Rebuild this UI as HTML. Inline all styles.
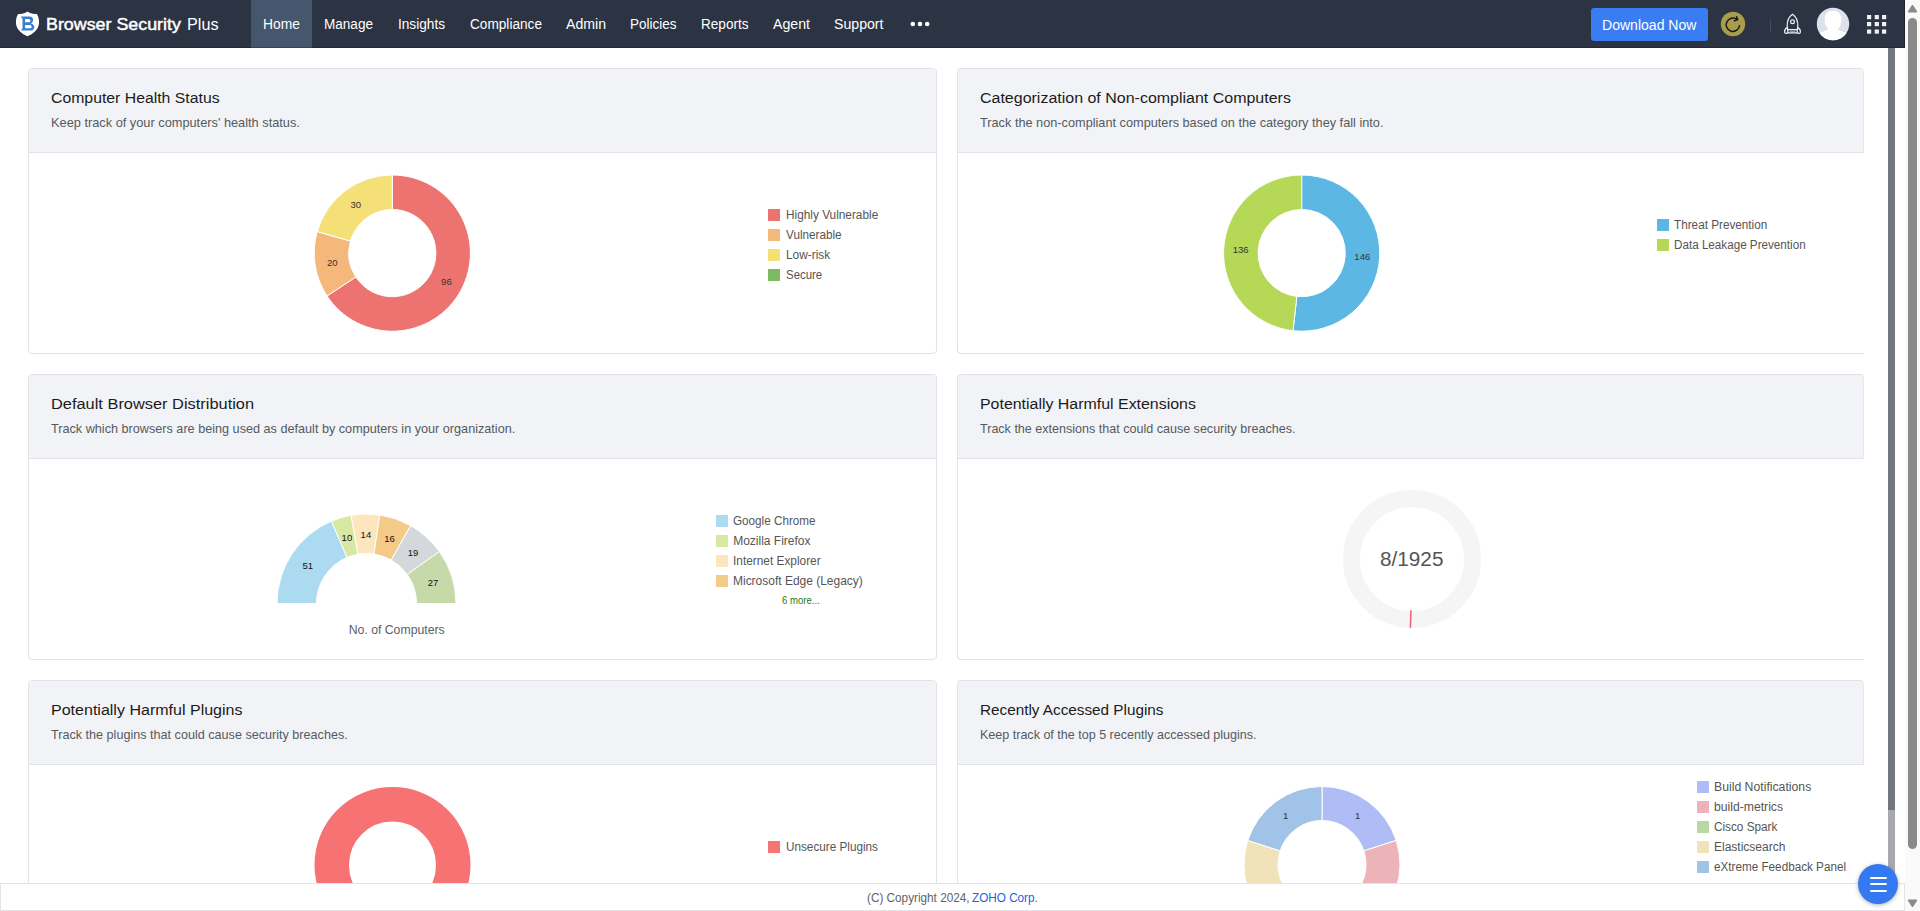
<!DOCTYPE html>
<html><head><meta charset="utf-8">
<style>
*{box-sizing:border-box;margin:0;padding:0}
html,body{width:1920px;height:911px;overflow:hidden;background:#fff;font-family:"Liberation Sans",sans-serif}
.a{position:absolute;white-space:nowrap;line-height:1}
.s{display:inline-block;transform-origin:0 0}
#hdr{position:absolute;left:0;top:0;width:1905px;height:48px;background:#2c3443}
#home{position:absolute;left:251px;top:0;width:61px;height:48px;background:#46566c}
.nav{color:#fff;font-size:14px;top:17px}
.card{position:absolute;border:1px solid #e2e3e8;border-radius:4px;background:#fff;overflow:hidden}
.ch{position:absolute;left:0;top:0;right:0;height:84px;background:#f2f3f7;border-bottom:1px solid #e2e3e8}
.ttl{font-size:15.5px;color:#1b1b1b}
.sub{font-size:13px;color:#555a60}
.lg{font-size:12px;color:#555}
.chr{border-right:1px solid #e6e7ec;border-top-right-radius:4px}
.sq{position:absolute;width:12px;height:12px}
.dl{font-size:10px;color:#333}
</style></head><body>

<!-- HEADER -->
<div id="hdr">
  <div id="home"></div>
  <div class="a" style="left:0;top:47px;width:1905px;height:1px;background:rgba(0,0,0,.22)"></div>
  <div class="a" style="left:1904px;top:0;width:1px;height:48px;background:rgba(0,0,0,.3)"></div>
  <svg class="a" style="left:12px;top:8px" width="32" height="32" viewBox="0 0 32 32">
    <path d="M15.5 3.6 C13.2 5.6 9.5 6.3 6.1 5.9 C4.3 9 3.8 12 4 15.2 C4.4 21.5 10 26 15.5 28.2 C21 26 26.6 21.5 27 15.2 C27.2 12 26.7 9 24.9 5.9 C21.5 6.3 17.8 5.6 15.5 3.6 Z" fill="#fff"/>
    <path fill-rule="evenodd" fill="#3b7dd0" d="M9.3 8.6 L17.5 8.6 C20 8.6 21.1 10 21.1 11.8 C21.1 13.5 20.2 14.7 19 15.5 C21.2 16.1 22.3 17.7 22.3 19.2 C22.3 21.2 20.7 22.6 18 22.6 L9.3 22.6 L9.3 21.5 L10.5 20.8 L10.5 10.5 L9.3 9.7 Z M13.1 11.1 L16.7 11.1 C17.9 11.1 18.4 11.9 18.4 12.7 C18.4 13.6 17.7 14.3 16.5 14.3 L13.1 14.3 Z M13.1 17.1 L17.8 17.1 C19 17.1 19.6 17.9 19.6 18.7 C19.6 19.6 19 20.3 17.8 20.3 L13.1 20.3 Z"/>
  </svg>
  <div class="a" style="left:45.5px;top:16px;font-size:17px;color:#fff;-webkit-text-stroke:.45px #fff"><span class="s" style="transform:scaleX(1.05)">Browser Security</span></div>
  <div class="a" style="left:187px;top:16px;font-size:17px;color:#fff"><span class="s" style="transform:scaleX(.952)">Plus</span></div>
  <div class="a nav" style="left:262.5px"><span class="s" style="transform:scaleX(.99)">Home</span></div>
  <div class="a nav" style="left:324px"><span class="s" style="transform:scaleX(.968)">Manage</span></div>
  <div class="a nav" style="left:397.5px"><span class="s" style="transform:scaleX(.974)">Insights</span></div>
  <div class="a nav" style="left:469.5px"><span class="s" style="transform:scaleX(.974)">Compliance</span></div>
  <div class="a nav" style="left:565.5px"><span class="s" style="transform:scaleX(1.008)">Admin</span></div>
  <div class="a nav" style="left:630px"><span class="s" style="transform:scaleX(.964)">Policies</span></div>
  <div class="a nav" style="left:701px"><span class="s" style="transform:scaleX(.969)">Reports</span></div>
  <div class="a nav" style="left:773px"><span class="s" style="transform:scaleX(1.011)">Agent</span></div>
  <div class="a nav" style="left:834px"><span class="s" style="transform:scaleX(1.009)">Support</span></div>
  <svg class="a" style="left:908px;top:18px" width="24" height="12" viewBox="0 0 24 12">
    <circle cx="4.8" cy="6" r="2.3" fill="#fff"/><circle cx="12" cy="6" r="2.3" fill="#fff"/><circle cx="19.2" cy="6" r="2.3" fill="#fff"/>
  </svg>
  <div class="a" style="left:1591px;top:8px;width:117px;height:33px;background:#3a7cf1;border-radius:3px"></div>
  <div class="a" style="left:1602px;top:17.5px;font-size:14px;color:#fff"><span class="s" style="transform:scaleX(1.003)">Download Now</span></div>
  <svg class="a" style="left:1720px;top:11px" width="26" height="26" viewBox="0 0 26 26">
    <circle cx="13" cy="13" r="12.2" fill="#a99c4b"/>
    <path d="M19.6 14.2 A6.7 6.7 0 1 1 17 8.4" fill="none" stroke="#12161c" stroke-width="1.5"/>
    <path d="M16.4 5.3 L17.6 8.6 L13.8 10" fill="none" stroke="#12161c" stroke-width="1.5" stroke-linejoin="miter"/>
  </svg>
  <div class="a" style="left:1770px;top:19px;width:1px;height:13px;background:#3b4c68"></div>
  <svg class="a" style="left:1782px;top:12px" width="22" height="24" viewBox="0 0 22 24">
    <g fill="none" stroke="#eef0f4" stroke-width="1.2" stroke-linejoin="round">
    <path d="M10.5 2.2 C6.8 4.8 5 9.5 5.2 14 L5.6 17.6 L15.4 17.6 L15.8 14 C16 9.5 14.2 4.8 10.5 2.2 Z"/>
    <path d="M5.8 17.6 L5.8 20.9 L15.2 20.9 L15.2 17.6"/>
    <path d="M5.3 15.6 C3.4 16.4 2.5 18 2.6 20 C2.7 21 3.4 21.6 4.3 21.4 L5.8 20.9"/>
    <path d="M15.7 15.6 C17.6 16.4 18.5 18 18.4 20 C18.3 21 17.6 21.6 16.7 21.4 L15.2 20.9"/>
    <circle cx="10.5" cy="9.8" r="1.9"/>
    </g>
    <rect x="7.8" y="18.6" width="5.6" height="1.4" fill="#8d939c"/>
  </svg>
  <svg class="a" style="left:1816px;top:7px" width="34" height="34" viewBox="0 0 34 34">
    <defs><clipPath id="av"><circle cx="17" cy="17" r="16.2"/></clipPath></defs>
    <circle cx="17" cy="17" r="16.2" fill="#dde1ea"/>
    <g clip-path="url(#av)" fill="#fff">
      <path d="M17 3.8 C11.6 3.8 8.6 7.3 8.7 12 C8.7 16.2 9.6 19.3 11.6 21.6 L11.6 23 C8.4 24.2 5 25 2.5 26.8 L2.5 34 L31.5 34 L31.5 26.8 C29 25 25.6 24.2 22.4 23 L22.4 21.6 C24.4 19.3 25.3 16.2 25.3 12 C25.4 7.3 22.4 3.8 17 3.8 Z"/>
    </g>
  </svg>
  <svg class="a" style="left:1866px;top:14px" width="22" height="21" viewBox="0 0 22 21">
    <g fill="#eef0f4">
    <rect x="1" y="1" width="4.2" height="4.2"/><rect x="8.7" y="1" width="4.2" height="4.2"/><rect x="16" y="1" width="4.2" height="4.2"/>
    <rect x="1" y="8" width="4.2" height="4.2"/><rect x="8.7" y="8" width="4.2" height="4.2"/><rect x="16" y="8" width="4.2" height="4.2"/>
    <rect x="1" y="15.5" width="4.2" height="4.2"/><rect x="8.7" y="15.5" width="4.2" height="4.2"/><rect x="16" y="15.5" width="4.2" height="4.2"/>
    </g>
  </svg>
</div>

<!-- CARDS -->
<div class="card" style="left:28px;top:68px;width:909px;height:286px"><div class="ch"></div></div>
<div class="card" style="left:957px;top:68px;width:907px;border-right:0;border-radius:4px 4px 0 4px;height:286px"><div class="ch chr"></div></div>
<div class="card" style="left:28px;top:374px;width:909px;height:286px"><div class="ch"></div></div>
<div class="card" style="left:957px;top:374px;width:907px;border-right:0;border-radius:4px 4px 0 4px;height:286px"><div class="ch chr"></div></div>
<div class="card" style="left:28px;top:680px;width:909px;height:286px"><div class="ch"></div></div>
<div class="card" style="left:957px;top:680px;width:907px;border-right:0;border-radius:4px 4px 0 4px;height:286px"><div class="ch chr"></div></div>

<svg class="a" style="left:0;top:0" width="1905" height="911" viewBox="0 0 1905 911">
<path d="M392.30 175.00A78.1 78.1 0 1 1 327.01 295.96L355.85 277.03A43.6 43.6 0 1 0 392.30 209.50Z" fill="#ec736f" stroke="#fff" stroke-width="1" stroke-linejoin="round"/>
<path d="M327.01 295.96A78.1 78.1 0 0 1 317.24 231.54L350.39 241.06A43.6 43.6 0 0 0 355.85 277.03Z" fill="#f4b87b" stroke="#fff" stroke-width="1" stroke-linejoin="round"/>
<path d="M317.24 231.54A78.1 78.1 0 0 1 392.30 175.00L392.30 209.50A43.6 43.6 0 0 0 350.39 241.06Z" fill="#f4e077" stroke="#fff" stroke-width="1" stroke-linejoin="round"/>
<path d="M1301.70 175.00A78.1 78.1 0 1 1 1293.02 330.72L1296.85 296.43A43.6 43.6 0 1 0 1301.70 209.50Z" fill="#5db7e4" stroke="#fff" stroke-width="1" stroke-linejoin="round"/>
<path d="M1293.02 330.72A78.1 78.1 0 0 1 1301.70 175.00L1301.70 209.50A43.6 43.6 0 0 0 1296.85 296.43Z" fill="#b5d857" stroke="#fff" stroke-width="1" stroke-linejoin="round"/>
<path d="M277.00 603.50A89.5 89.5 0 0 1 331.54 521.11L346.97 557.47A50 50 0 0 0 316.50 603.50Z" fill="#acdaf1" stroke="#fff" stroke-width="1" stroke-linejoin="round"/>
<path d="M331.54 521.11A89.5 89.5 0 0 1 351.18 515.32L357.94 554.24A50 50 0 0 0 346.97 557.47Z" fill="#d6e8a1" stroke="#fff" stroke-width="1" stroke-linejoin="round"/>
<path d="M351.18 515.32A89.5 89.5 0 0 1 379.79 514.99L373.93 554.05A50 50 0 0 0 357.94 554.24Z" fill="#fde5bd" stroke="#fff" stroke-width="1" stroke-linejoin="round"/>
<path d="M379.79 514.99A89.5 89.5 0 0 1 410.66 525.65L391.17 560.01A50 50 0 0 0 373.93 554.05Z" fill="#f4ca88" stroke="#fff" stroke-width="1" stroke-linejoin="round"/>
<path d="M410.66 525.65A89.5 89.5 0 0 1 439.39 551.56L407.22 574.48A50 50 0 0 0 391.17 560.01Z" fill="#d5d8da" stroke="#fff" stroke-width="1" stroke-linejoin="round"/>
<path d="M439.39 551.56A89.5 89.5 0 0 1 456.00 603.50L416.50 603.50A50 50 0 0 0 407.22 574.48Z" fill="#c6daa9" stroke="#fff" stroke-width="1" stroke-linejoin="round"/>
<circle cx="392.5" cy="865" r="60.75" fill="none" stroke="#f77272" stroke-width="34.5"/>
<path d="M1322.00 786.50A78 78 0 0 1 1396.18 840.40L1363.85 850.90A44 44 0 0 0 1322.00 820.50Z" fill="#b0bcf6" stroke="#fff" stroke-width="1" stroke-linejoin="round"/>
<path d="M1396.18 840.40A78 78 0 0 1 1367.85 927.60L1347.86 900.10A44 44 0 0 0 1363.85 850.90Z" fill="#ecb4b9" stroke="#fff" stroke-width="1" stroke-linejoin="round"/>
<path d="M1367.85 927.60A78 78 0 0 1 1276.15 927.60L1296.14 900.10A44 44 0 0 0 1347.86 900.10Z" fill="#bad7a1" stroke="#fff" stroke-width="1" stroke-linejoin="round"/>
<path d="M1276.15 927.60A78 78 0 0 1 1247.82 840.40L1280.15 850.90A44 44 0 0 0 1296.14 900.10Z" fill="#f0e2b9" stroke="#fff" stroke-width="1" stroke-linejoin="round"/>
<path d="M1247.82 840.40A78 78 0 0 1 1322.00 786.50L1322.00 820.50A44 44 0 0 0 1280.15 850.90Z" fill="#a1c3e7" stroke="#fff" stroke-width="1" stroke-linejoin="round"/>
<circle cx="1412" cy="559" r="60.5" fill="none" stroke="#f5f5f5" stroke-width="17"/>
<line x1="1410.9" y1="610.3" x2="1410.4" y2="627.7" stroke="#e8626a" stroke-width="1.5"/>
</svg>
<svg class="a" style="left:0;top:0" width="1905" height="911" viewBox="0 0 1905 911" font-family="Liberation Sans, sans-serif">
<text x="355.7" y="207.8" font-size="9.5" fill="#333" text-anchor="middle">30</text>
<text x="332.3" y="266.0" font-size="9.5" fill="#333" text-anchor="middle">20</text>
<text x="446.4" y="284.8" font-size="9.5" fill="#333" text-anchor="middle">96</text>
<text x="1240.7" y="253.1" font-size="9.5" fill="#333" text-anchor="middle">136</text>
<text x="1362.3" y="259.8" font-size="9.5" fill="#333" text-anchor="middle">146</text>
<text x="1285.7" y="819.1" font-size="9.5" fill="#333" text-anchor="middle">1</text>
<text x="1357.6" y="819.1" font-size="9.5" fill="#333" text-anchor="middle">1</text>
<text x="1264" y="889.4" font-size="9.5" fill="#333" text-anchor="middle">1</text>
<text x="1380" y="889.4" font-size="9.5" fill="#333" text-anchor="middle">1</text>
<text x="307.8" y="568.9" font-size="9.5" fill="#111" text-anchor="middle">51</text>
<text x="346.9" y="540.8" font-size="9.5" fill="#111" text-anchor="middle">10</text>
<text x="365.9" y="538.2" font-size="9.5" fill="#111" text-anchor="middle">14</text>
<text x="389.6" y="541.7" font-size="9.5" fill="#111" text-anchor="middle">16</text>
<text x="413.1" y="555.7" font-size="9.5" fill="#111" text-anchor="middle">19</text>
<text x="433" y="585.6" font-size="9.5" fill="#111" text-anchor="middle">27</text>
<text x="1411.7" y="566" font-size="20" fill="#555" text-anchor="middle" textLength="63.5" lengthAdjust="spacingAndGlyphs">8/1925</text>
<text x="348.7" y="633.6" font-size="12" fill="#5a5f66" textLength="96" lengthAdjust="spacingAndGlyphs">No. of Computers</text>
</svg>
<div class="sq" style="left:768px;top:209px;background:#ec736f"></div>
<div class="a lg" style="left:785.5px;top:209.4px"><span class="s" style="transform:scaleX(0.985)">Highly Vulnerable</span></div>
<div class="sq" style="left:768px;top:229px;background:#f4b87b"></div>
<div class="a lg" style="left:785.5px;top:229.4px"><span class="s" style="transform:scaleX(0.977)">Vulnerable</span></div>
<div class="sq" style="left:768px;top:249px;background:#f4e077"></div>
<div class="a lg" style="left:785.5px;top:249.4px"><span class="s" style="transform:scaleX(0.989)">Low-risk</span></div>
<div class="sq" style="left:768px;top:269px;background:#7dbb62"></div>
<div class="a lg" style="left:785.5px;top:269.4px"><span class="s" style="transform:scaleX(0.953)">Secure</span></div>
<div class="sq" style="left:1657px;top:219px;background:#5db7e4"></div>
<div class="a lg" style="left:1674.4px;top:219.4px"><span class="s" style="transform:scaleX(0.978)">Threat Prevention</span></div>
<div class="sq" style="left:1657px;top:239px;background:#b5d857"></div>
<div class="a lg" style="left:1674.4px;top:239.4px"><span class="s" style="transform:scaleX(0.972)">Data Leakage Prevention</span></div>
<div class="sq" style="left:716px;top:515px;background:#acdaf1"></div>
<div class="a lg" style="left:733.2px;top:515.4px"><span class="s" style="transform:scaleX(0.974)">Google Chrome</span></div>
<div class="sq" style="left:716px;top:535px;background:#d6e8a1"></div>
<div class="a lg" style="left:733.2px;top:535.4px"><span class="s" style="transform:scaleX(1.0)">Mozilla Firefox</span></div>
<div class="sq" style="left:716px;top:555px;background:#fde5bd"></div>
<div class="a lg" style="left:733.2px;top:555.4px"><span class="s" style="transform:scaleX(0.988)">Internet Explorer</span></div>
<div class="sq" style="left:716px;top:575px;background:#f4ca88"></div>
<div class="a lg" style="left:733.2px;top:575.4px"><span class="s" style="transform:scaleX(0.998)">Microsoft Edge (Legacy)</span></div>
<div class="a" style="left:782px;top:595.5px;font-size:10px;color:#1f7a0e"><span class="s" style="transform:scaleX(.955)">6 more...</span></div>
<div class="sq" style="left:768px;top:841px;background:#f77474"></div>
<div class="a lg" style="left:785.5px;top:841.4px"><span class="s" style="transform:scaleX(0.978)">Unsecure Plugins</span></div>
<div class="sq" style="left:1697px;top:781px;background:#b0bcf6"></div>
<div class="a lg" style="left:1714px;top:781.4px"><span class="s" style="transform:scaleX(1.02)">Build Notifications</span></div>
<div class="sq" style="left:1697px;top:801px;background:#ecb4b9"></div>
<div class="a lg" style="left:1714px;top:801.4px"><span class="s" style="transform:scaleX(1.015)">build-metrics</span></div>
<div class="sq" style="left:1697px;top:821px;background:#bad7a1"></div>
<div class="a lg" style="left:1714px;top:821.4px"><span class="s" style="transform:scaleX(0.98)">Cisco Spark</span></div>
<div class="sq" style="left:1697px;top:841px;background:#f0e2b9"></div>
<div class="a lg" style="left:1714px;top:841.4px"><span class="s" style="transform:scaleX(1.0)">Elasticsearch</span></div>
<div class="sq" style="left:1697px;top:861px;background:#a1c3e7"></div>
<div class="a lg" style="left:1714px;top:861.4px"><span class="s" style="transform:scaleX(0.975)">eXtreme Feedback Panel</span></div>
<!-- TITLES -->
<div class="a ttl" style="left:51px;top:89.5px"><span class="s" style="transform:scaleX(1.019)">Computer Health Status</span></div>
<div class="a sub" style="left:51px;top:116px"><span class="s" style="transform:scaleX(.983)">Keep track of your computers' health status.</span></div>
<div class="a ttl" style="left:980px;top:89.5px"><span class="s" style="transform:scaleX(1.031)">Categorization of Non-compliant Computers</span></div>
<div class="a sub" style="left:980px;top:116px"><span class="s" style="transform:scaleX(.979)">Track the non-compliant computers based on the category they fall into.</span></div>
<div class="a ttl" style="left:51px;top:395.5px"><span class="s" style="transform:scaleX(1.057)">Default Browser Distribution</span></div>
<div class="a sub" style="left:51px;top:422px"><span class="s" style="transform:scaleX(.973)">Track which browsers are being used as default by computers in your organization.</span></div>
<div class="a ttl" style="left:980px;top:395.5px"><span class="s" style="transform:scaleX(1.027)">Potentially Harmful Extensions</span></div>
<div class="a sub" style="left:980px;top:422px"><span class="s" style="transform:scaleX(.965)">Track the extensions that could cause security breaches.</span></div>
<div class="a ttl" style="left:51px;top:701.5px"><span class="s" style="transform:scaleX(1.034)">Potentially Harmful Plugins</span></div>
<div class="a sub" style="left:51px;top:728px"><span class="s" style="transform:scaleX(.97)">Track the plugins that could cause security breaches.</span></div>
<div class="a ttl" style="left:980px;top:701.5px"><span class="s" style="transform:scaleX(.986)">Recently Accessed Plugins</span></div>
<div class="a sub" style="left:980px;top:728px"><span class="s" style="transform:scaleX(.964)">Keep track of the top 5 recently accessed plugins.</span></div>


<!-- FOOTER -->
<div class="a" style="left:0;top:883px;width:1905px;height:28px;background:#fff;border:1px solid #e3e4e9"></div>
<div class="a" style="left:866.5px;top:892px;font-size:12.5px;color:#606368"><span class="s" style="transform:scaleX(.94)">(C) Copyright 2024, </span></div>
<div class="a" style="left:972px;top:892px;font-size:12.5px;color:#1f62d6"><span class="s" style="transform:scaleX(.938)">ZOHO Corp.</span></div>
<!-- inner scrollbar -->
<div class="a" style="left:1888px;top:48px;width:7px;height:835px;background:#a7a9ae"></div>
<div class="a" style="left:1888px;top:48px;width:7px;height:762px;background:#73767f"></div>
<!-- outer scrollbar -->
<div class="a" style="left:1905px;top:0;width:15px;height:911px;background:#fafafa"></div>
<svg class="a" style="left:1905px;top:0" width="15" height="911" viewBox="0 0 15 911">
 <path d="M7.5 5 L12 12 L3 12 Z" fill="#8a8a8a" stroke="#8a8a8a" stroke-width="1" stroke-linejoin="round"/>
 <rect x="3" y="18" width="9" height="831" rx="4.5" fill="#8a8a8a"/>
 <path d="M7.5 907 L12 900 L3 900 Z" fill="#8a8a8a" stroke="#8a8a8a" stroke-width="1" stroke-linejoin="round"/>
</svg>
<!-- chat -->
<div class="a" style="left:1858px;top:864px;width:40px;height:40px;border-radius:50%;background:#3478f2;box-shadow:0 1px 4px rgba(0,0,0,.3)"></div>
<div class="a" style="left:1870px;top:876.6px;width:17px;height:2px;border-radius:1px;background:#fff"></div>
<div class="a" style="left:1870px;top:883px;width:17px;height:2px;border-radius:1px;background:#fff"></div>
<div class="a" style="left:1870px;top:889.5px;width:17px;height:2px;border-radius:1px;background:#fff"></div>
</body></html>
